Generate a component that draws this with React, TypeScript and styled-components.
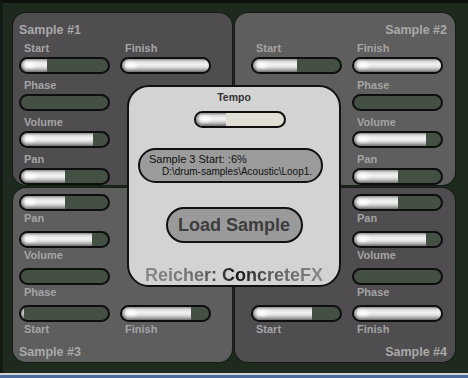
import React from 'react';
import styled, { createGlobalStyle } from 'styled-components';

const GlobalStyle = createGlobalStyle`
  html, body { margin: 0; padding: 0; background: #1e2a1e; }
  body { font-family: "Liberation Sans", Arial, sans-serif; }
  * { box-sizing: border-box; }
`;

const Screen = styled.div`
  width: 468px;
  height: 378px;
  overflow: hidden;
  background: #1e2a1e;
  display: flex;
  flex-direction: column;
`;

const Stage = styled.div`
  flex: 1;
  border-top: 3px solid #0c100c;
  border-left: 3px solid #121812;
  padding: 10px 0 0 10px;
`;

const TaskStrip = styled.div`
  height: 5px;
  border-top: 2px solid #d4d4d4;
  background: #4d6c9c;
`;

const PanelGrid = styled.div`
  position: relative;
  display: grid;
  grid-template-columns: 219px 220px;
  grid-template-rows: 172px 174px;
  gap: 3px;
  width: 442px;
`;

type Tone = 'dark' | 'light';
type Side = 'left' | 'right';
type Pos = 'top' | 'bottom';

const Panel = styled.section<{ $tone: Tone; $side: Side; $pos: Pos }>`
  background: ${(p) => (p.$tone === 'dark' ? '#4f4d50' : '#5e5e5e')};
  border-radius: 13px;
  box-shadow: 0 0 0 1px rgba(0, 0, 0, 0.35);
  display: flex;
  flex-direction: ${(p) => (p.$pos === 'top' ? 'column' : 'column-reverse')};
  justify-content: flex-end;
  padding-top: ${(p) => (p.$pos === 'top' ? '2px' : '0')};
  padding-bottom: ${(p) => (p.$pos === 'top' ? '0' : '2.5px')};
  padding-left: ${(p) => (p.$side === 'left' ? '6px' : '16px')};
  padding-right: 8px;
`;

const PanelTitle = styled.h2<{ $side: Side }>`
  margin: 0;
  font-size: 12.5px;
  line-height: 15px;
  font-weight: bold;
  color: #a9a9a9;
  align-self: ${(p) => (p.$side === 'left' ? 'flex-start' : 'flex-end')};
`;

const Controls = styled.div<{ $pos: Pos }>`
  display: grid;
  grid-template-columns: 91px 91px;
  column-gap: 10px;
  row-gap: ${(p) => (p.$pos === 'top' ? '5px' : '6px')};
  margin-top: ${(p) => (p.$pos === 'top' ? '4px' : '6px')};
  margin-bottom: ${(p) => (p.$pos === 'top' ? '0' : '8.5px')};
`;

const Control = styled.div<{ $col: number; $row: number; $below: boolean }>`
  grid-column: ${(p) => p.$col};
  grid-row: ${(p) => p.$row};
  display: flex;
  flex-direction: ${(p) => (p.$below ? 'column-reverse' : 'column')};
  gap: ${(p) => (p.$below ? '1px' : '2px')};
`;

const Label = styled.span`
  font-size: 11px;
  line-height: 13px;
  font-weight: bold;
  color: #a4a4a4;
  padding-left: 5px;
`;

const Track = styled.div<{ $light?: boolean; $w: number; $shift: number }>`
  width: ${(p) => p.$w}px;
  height: 17px;
  margin-left: ${(p) => p.$shift}px;
  border: 2px solid #0e0e0e;
  border-radius: 9px;
  overflow: hidden;
  background: ${(p) => (p.$light ? '#e1ded6' : '#455045')};
`;

const Fill = styled.div`
  height: 100%;
  background:
    radial-gradient(ellipse 9px 5px at 9px 6px, rgba(255, 255, 255, 1), rgba(255, 255, 255, 0)),
    linear-gradient(to right, rgba(0, 0, 0, 0.45) 0, rgba(0, 0, 0, 0) 5px),
    linear-gradient(to bottom, #8c8c8c 0%, #d9d9d9 18%, #f2f2f2 40%, #e4e4e4 60%, #b4b4b4 80%, #6e6e6e 100%);
`;

const Slider: React.FC<{ value: number; light?: boolean; width?: number; shift?: number }> = ({
  value,
  light,
  width = 91,
  shift = 0,
}) => (
  <Track $light={light} $w={width} $shift={shift}>
    <Fill style={{ width: `${value}%` }} />
  </Track>
);

const Console = styled.div`
  position: absolute;
  left: 114px;
  top: 72px;
  width: 214px;
  height: 202px;
  background: #d3d3d3;
  border: 2px solid #111;
  border-radius: 22px;
  display: flex;
  flex-direction: column;
  align-items: center;
  padding-top: 4px;
`;

const ConsoleTitle = styled.div`
  font-size: 10.5px;
  line-height: 13px;
  font-weight: bold;
  color: #333;
  margin-bottom: 7px;
`;

const InfoBox = styled.div`
  align-self: flex-start;
  margin: 20px 0 0 9px;
  width: 185px;
  height: 35px;
  border: 2px solid #111;
  border-radius: 18px;
  background: #9b9b9b;
  padding: 3px 0 0 9px;
  overflow: hidden;
  white-space: nowrap;
  color: #111;
`;

const InfoLine = styled.div<{ $indent?: boolean }>`
  font-size: ${(p) => (p.$indent ? '10px' : '11px')};
  line-height: ${(p) => (p.$indent ? '12px' : '12.5px')};
  padding-left: ${(p) => (p.$indent ? '13px' : '0')};
`;

const LoadButton = styled.button`
  margin-top: 24px;
  width: 137px;
  height: 36px;
  border: 2px solid #111;
  border-radius: 18px;
  background: #9a9a9a;
  font-family: inherit;
  font-size: 18px;
  font-weight: bold;
  color: #3d3d3d;
  display: flex;
  align-items: center;
  justify-content: center;
  padding: 0;
`;

const Brand = styled.div`
  margin-top: 22px;
  font-size: 18px;
  line-height: 20px;
  font-weight: bold;
  background: linear-gradient(
    to right,
    #8a8a8a 0%,
    #6e6e6e 30%,
    #3a3a3a 44%,
    #151515 52%,
    #2a2a2a 58%,
    #555 68%,
    #6a6a6a 80%,
    #8a8a8a 100%
  );
  -webkit-background-clip: text;
  background-clip: text;
  color: transparent;
`;

type Ctl = { label: string; value: number; col: number; row: number };

const panels: { title: string; tone: Tone; side: Side; pos: Pos; controls: Ctl[] }[] = [
  {
    title: 'Sample #1',
    tone: 'dark',
    side: 'left',
    pos: 'top',
    controls: [
      { label: 'Start', value: 30, col: 1, row: 1 },
      { label: 'Finish', value: 100, col: 2, row: 1 },
      { label: 'Phase', value: 0, col: 1, row: 2 },
      { label: 'Volume', value: 83, col: 1, row: 3 },
      { label: 'Pan', value: 51, col: 1, row: 4 },
    ],
  },
  {
    title: 'Sample #2',
    tone: 'light',
    side: 'right',
    pos: 'top',
    controls: [
      { label: 'Start', value: 51, col: 1, row: 1 },
      { label: 'Finish', value: 100, col: 2, row: 1 },
      { label: 'Phase', value: 0, col: 2, row: 2 },
      { label: 'Volume', value: 83, col: 2, row: 3 },
      { label: 'Pan', value: 51, col: 2, row: 4 },
    ],
  },
  {
    title: 'Sample #3',
    tone: 'light',
    side: 'left',
    pos: 'bottom',
    controls: [
      { label: 'Pan', value: 51, col: 1, row: 1 },
      { label: 'Volume', value: 82, col: 1, row: 2 },
      { label: 'Phase', value: 0, col: 1, row: 3 },
      { label: 'Start', value: 4, col: 1, row: 4 },
      { label: 'Finish', value: 79, col: 2, row: 4 },
    ],
  },
  {
    title: 'Sample #4',
    tone: 'dark',
    side: 'right',
    pos: 'bottom',
    controls: [
      { label: 'Pan', value: 51, col: 2, row: 1 },
      { label: 'Volume', value: 83, col: 2, row: 2 },
      { label: 'Phase', value: 0, col: 2, row: 3 },
      { label: 'Start', value: 68, col: 1, row: 4 },
      { label: 'Finish', value: 100, col: 2, row: 4 },
    ],
  },
];

export default function App() {
  return (
    <>
      <GlobalStyle />
      <Screen>
        <Stage>
          <PanelGrid>
            {panels.map((p) => (
              <Panel key={p.title} $tone={p.tone} $side={p.side} $pos={p.pos}>
                <PanelTitle $side={p.side}>{p.title}</PanelTitle>
                <Controls $pos={p.pos}>
                  {p.controls.map((c) => (
                    <Control key={c.label} $col={c.col} $row={c.row} $below={p.pos === 'bottom'}>
                      <Label>{c.label}</Label>
                      <Slider value={c.value} />
                    </Control>
                  ))}
                </Controls>
              </Panel>
            ))}
            <Console>
              <ConsoleTitle>Tempo</ConsoleTitle>
              <Slider value={34} light width={92} shift={12} />
              <InfoBox>
                <InfoLine>Sample 3 Start: :6%</InfoLine>
                <InfoLine $indent>D:\drum-samples\Acoustic\Loop1.</InfoLine>
              </InfoBox>
              <LoadButton>Load Sample</LoadButton>
              <Brand>Reicher: ConcreteFX</Brand>
            </Console>
          </PanelGrid>
        </Stage>
        <TaskStrip />
      </Screen>
    </>
  );
}
